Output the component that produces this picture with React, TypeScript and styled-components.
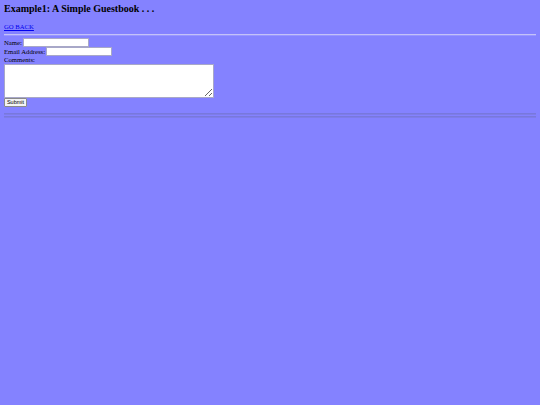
import React from 'react'
import styled, { createGlobalStyle } from 'styled-components'

const GlobalStyle = createGlobalStyle`
  html, body {
    background: #8482ff;
  }
  body {
    margin: 3px 4px;
    font-family: "Liberation Serif", "Times New Roman", serif;
    font-size: 6.7px;
    color: #000;
  }
`

const Title = styled.h2`
  font-size: 10px;
  line-height: 12px;
  font-weight: bold;
  margin: 0 0 8px;
`

const BackLink = styled.a`
  display: block;
  line-height: 8px;
  color: #0000ee;
  text-decoration: underline;
`

const Rule = styled.hr<{ $dark?: boolean }>`
  height: 0;
  margin: ${(p) => (p.$dark ? '1px 0' : '3px 0 2px')};
  border: none;
  border-top: 1px solid ${(p) => (p.$dark ? '#7878dc' : '#c4c2f8')};
  border-bottom: 1px solid ${(p) => (p.$dark ? '#7e7ce8' : '#9896ff')};
`

const Form = styled.form`
  display: flex;
  flex-direction: column;
  align-items: flex-start;
  line-height: 8px;
  margin-bottom: 6px;
`

const Row = styled.label`
  display: flex;
  align-items: center;
  height: 9px;
  gap: 1px;
`

const TextInput = styled.input`
  width: 64px;
  height: 7px;
  padding: 0;
  margin: 0;
  border: 1px solid #a8a8c8;
  background: #fff;
  font-size: 6px;
  box-sizing: content-box;
`

const Comments = styled.textarea`
  width: 208px;
  height: 32px;
  padding: 0;
  margin: 0;
  border: 1px solid #a8a8c8;
  background: #fff;
  font-size: 6px;
  box-sizing: content-box;
  display: block;
`

const SubmitButton = styled.button`
  font-family: "Liberation Sans", Arial, sans-serif;
  font-size: 5.5px;
  height: 9px;
  width: 23px;
  padding: 0;
  background: #f4f4f4;
  border: 1px solid #8a8a8a;
  border-radius: 1px;
  line-height: 7px;
`

export default function App() {
  return (
    <React.Fragment>
      <GlobalStyle />
      <Title>Example1: A Simple Guestbook . . .</Title>
      <BackLink href="#">GO BACK</BackLink>
      <Rule />
      <Form onSubmit={(e) => e.preventDefault()}>
        <Row>
          Name: <TextInput type="text" />
        </Row>
        <Row>
          Email Address: <TextInput type="text" />
        </Row>
        <span>Comments:</span>
        <Comments />
        <SubmitButton type="submit">Submit</SubmitButton>
      </Form>
      <Rule $dark />
      <Rule $dark />
    </React.Fragment>
  )
}
